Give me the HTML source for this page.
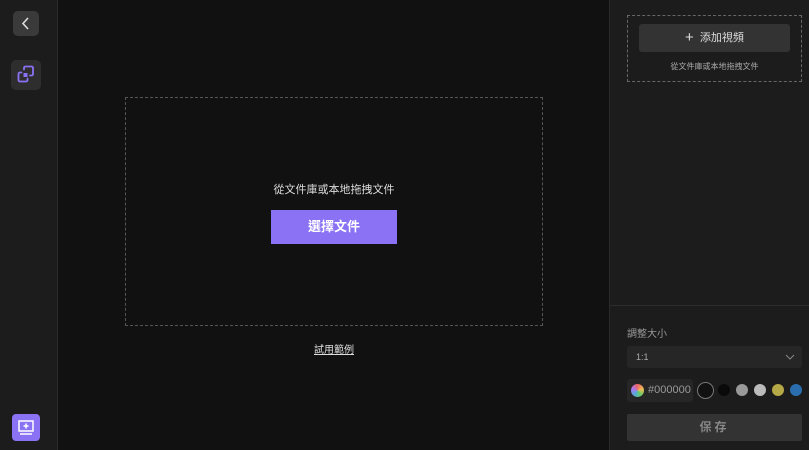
<!DOCTYPE html><html><head><meta charset="utf-8"><style>
*{margin:0;padding:0;box-sizing:border-box}
body{width:809px;height:450px;background:#111;font-family:"Liberation Sans","Noto Sans CJK TC",sans-serif;position:relative;overflow:hidden;color:#ddd}
.a{position:absolute}
</style></head><body>
<div class="a" style="left:0;top:0;width:58px;height:450px;background:#1c1c1c;border-right:1px solid #2a2a2a"></div>
<div class="a" style="left:13px;top:11px;width:26px;height:25px;background:#3a3a3a;border-radius:5px"><svg width="26" height="25"><path d="M15 7l-5 5.5 5 5.5" stroke="#ddd" stroke-width="1.6" fill="none"/></svg></div>
<div class="a" style="left:11px;top:60px;width:30px;height:30px;background:#2e2e2e;border-radius:5px"><svg width="30" height="30" fill="none" stroke="#8b72f5" stroke-width="1.8" stroke-linecap="round"><path d="M13 9.5v-1.5a1.5 1.5 0 0 1 1.5-1.5h6a1.5 1.5 0 0 1 1.5 1.5v6a1.5 1.5 0 0 1-1.5 1.5h-1.5"/><path d="M10.5 12.5h-1.5a1.5 1.5 0 0 0-1.5 1.5v6a1.5 1.5 0 0 0 1.5 1.5h6a1.5 1.5 0 0 0 1.5-1.5v-1.5"/><rect x="12.5" y="13" width="4" height="4" fill="#8b72f5" stroke="none"/></svg></div>
<div class="a" style="left:12px;top:414px;width:28px;height:27px;background:#8b72f5;border-radius:4px"><svg width="28" height="27" fill="none" stroke="#fff" stroke-width="1.5"><rect x="7" y="7" width="14" height="10"/><path d="M14 9.5v5M11.5 12h5M8 20h12"/></svg></div>

<div class="a" style="left:125px;top:97px;width:418px;height:229px;border:1px dashed #555"></div>
<div class="a" style="left:125px;top:181px;width:418px;text-align:center;font-size:11px;color:#ddd">從文件庫或本地拖拽文件</div>
<div class="a" style="left:271px;top:210px;width:126px;height:34px;background:#8b72f5;color:#fff;font-size:13px;font-weight:bold;text-align:center;line-height:34px">選擇文件</div>
<div class="a" style="left:125px;top:341px;width:418px;text-align:center;font-size:10px;color:#ddd"><span style="text-decoration:underline">試用範例</span></div>

<div class="a" style="left:609px;top:0;width:200px;height:450px;background:#1c1c1c;border-left:1px solid #2a2a2a"></div>
<div class="a" style="left:627px;top:15px;width:175px;height:67px;border:1px dashed #666"></div>
<div class="a" style="left:639px;top:24px;width:151px;height:28px;background:#333;border-radius:3px;color:#ddd;font-size:11px;text-align:center;line-height:28px"><span style="font-size:15px;vertical-align:-1px">+</span>&nbsp; 添加視頻</div>
<div class="a" style="left:627px;top:61px;width:175px;text-align:center;font-size:8px;color:#aaa">從文件庫或本地拖拽文件</div>
<div class="a" style="left:610px;top:305px;width:199px;height:1px;background:#2c2c2c"></div>
<div class="a" style="left:627px;top:325px;font-size:10px;color:#999">調整大小</div>
<div class="a" style="left:627px;top:346px;width:175px;height:22px;background:#262626;border-radius:3px;font-size:9px;color:#aaa;line-height:22px;padding-left:9px">1:1<svg class="a" style="right:7px;top:7px" width="10" height="8"><path d="M1 2l4 4 4-4" stroke="#888" fill="none"/></svg></div>
<div class="a" style="left:627px;top:379px;width:66px;height:23px;background:#262626;border-radius:3px"><div class="a" style="left:4px;top:5px;width:13px;height:13px;border-radius:50%;background:conic-gradient(#e66,#eb5,#6c6,#5ad,#a7e,#e66)"></div><div class="a" style="left:21px;top:5px;font-size:11px;color:#999">#000000</div></div>
<div class="a" style="left:697px;top:382px;width:17px;height:17px;border-radius:50%;background:#111;border:1px solid #777"></div>
<div class="a" style="left:718px;top:384px;width:12px;height:12px;border-radius:50%;background:#0a0a0a"></div>
<div class="a" style="left:736px;top:384px;width:12px;height:12px;border-radius:50%;background:#999"></div>
<div class="a" style="left:754px;top:384px;width:12px;height:12px;border-radius:50%;background:#bbb"></div>
<div class="a" style="left:772px;top:384px;width:12px;height:12px;border-radius:50%;background:#b5a846"></div>
<div class="a" style="left:790px;top:384px;width:12px;height:12px;border-radius:50%;background:#2a6eb0"></div>
<div class="a" style="left:627px;top:414px;width:175px;height:27px;background:#333;border-radius:2px;color:#888;font-size:12px;font-weight:bold;text-align:center;line-height:27px;letter-spacing:3px">保存</div>
</body></html>
